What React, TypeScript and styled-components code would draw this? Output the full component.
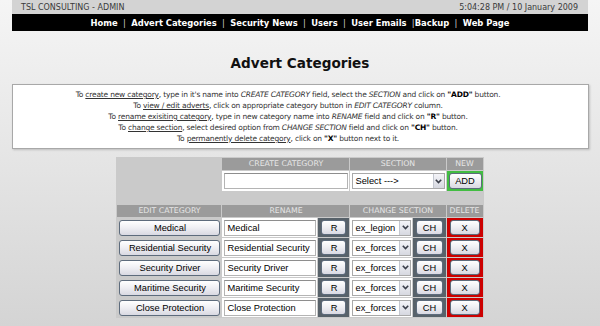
import * as React from 'react';
import styled, { createGlobalStyle } from 'styled-components';

const GlobalStyle = createGlobalStyle`
  html, body {
    margin: 0;
    padding: 0;
  }
  body {
    min-height: 326px;
    background: linear-gradient(to bottom, #f5f5f5 0px, #e8e8e8 130px, #d4d4d4 326px);
    font-family: "DejaVu Sans", Verdana, sans-serif;
    color: #333;
  }
  * {
    box-sizing: border-box;
  }
`;

const Page = styled.div`
  width: 600px;
  min-height: 326px;
  padding-bottom: 8px;
`;

const Header = styled.div`
  width: 576px;
  margin: 0 auto;
`;

const TopBar = styled.div`
  height: 14px;
  background: #d3d3d3;
  display: flex;
  align-items: center;
  justify-content: space-between;
  padding: 0 10px 0 9px;
  font-size: 8px;
  color: #3a3a3a;
`;

const NavBar = styled.div`
  height: 17px;
  background: #000;
  display: flex;
  align-items: center;
  justify-content: center;
  font-size: 8.4px;
  font-weight: bold;
  color: #fff;
  white-space: pre;
`;

const NavSep = styled.span`
  font-weight: normal;
  color: #d0d0d0;
`;

const Title = styled.h1`
  margin: 24px 0 13px;
  height: 16px;
  line-height: 16px;
  font-size: 13.6px;
  font-weight: bold;
  text-align: center;
  color: #111;
`;

const Info = styled.div`
  width: 577px;
  margin: 0 auto;
  background: #fff;
  border: 1px solid #a8a8a8;
  box-shadow: 1px 1px 2px rgba(0, 0, 0, 0.18);
  padding: 4px 24px 4px 0;
  text-align: center;
  font-size: 7.5px;
  letter-spacing: -0.2px;
  line-height: 11px;
  color: #333;

  u {
    text-decoration: underline;
  }
  b {
    color: #000;
  }
`;

const Table = styled.table`
  margin: 8px auto 0;
  width: 367px;
  table-layout: fixed;
  border-collapse: separate;
  border-spacing: 1px;
  background: #cacaca;
`;

const Head = styled.th`
  background: #9b9b9b;
  color: #e6e6e6;
  font-size: 7.8px;
  font-weight: normal;
  text-transform: uppercase;
  text-align: center;
  height: 12px;
  line-height: 12px;
  padding: 0;
`;

type Tone = 'plain' | 'white' | 'dark' | 'red' | 'green';

const toneBg: Record<Tone, string> = {
  plain: 'transparent',
  white: '#fff',
  dark: '#58626a',
  red: '#cc0000',
  green: '#42bd42',
};

const Cell = styled.td<{ $tone: Tone; $h?: number }>`
  background: ${p => toneBg[p.$tone]};
  height: ${p => p.$h || 19}px;
  padding: ${p =>
    p.$tone === 'plain' ? '0 1px 0 2px' : p.$tone === 'white' ? '0 1px 0 2px' : p.$tone === 'green' ? '2px 1px 2px 2px' : '0 3px'};
  vertical-align: middle;
`;

const Btn = styled.button<{ $h?: number }>`
  display: block;
  width: 100%;
  height: ${p => p.$h || 16}px;
  margin: 0;
  padding: 0;
  border: 1px solid #5d6b7c;
  border-radius: 3px;
  background: linear-gradient(to bottom, #ffffff 0%, #f0f0f4 45%, #d9d9e2 100%);
  font-family: "Liberation Sans", Arial, sans-serif;
  font-size: 9.3px;
  color: #000;
  line-height: 14px;
  white-space: nowrap;
  overflow: hidden;
`;

const TextBox = styled.input`
  display: block;
  width: 100%;
  height: 16px;
  margin: 0;
  padding: 0 2px;
  border: 1px solid #b4b4b4;
  border-top-color: #8e8e8e;
  background: #fff;
  font-family: "Liberation Sans", Arial, sans-serif;
  font-size: 9.3px;
  color: #000;
  outline: none;
`;

const SelectBox = styled.div`
  display: flex;
  align-items: stretch;
  width: 100%;
  height: 16px;
  border: 1px solid #a9a9a9;
  background: #fff;
  font-family: "Liberation Sans", Arial, sans-serif;
  font-size: 9.3px;
  color: #000;
`;

const SelectText = styled.span`
  flex: 1;
  padding-left: 2px;
  line-height: 14px;
  white-space: nowrap;
  overflow: hidden;
`;

const SelectArrow = styled.span`
  width: 11px;
  display: flex;
  align-items: center;
  justify-content: center;
  border-left: 1px solid #c3c7d0;
  background: linear-gradient(to bottom, #f4f4f8, #d6d8e0);
`;

const Select: React.FC<{ value: string }> = ({ value }) => (
  <SelectBox>
    <SelectText>{value}</SelectText>
    <SelectArrow>
      <svg width="7" height="5" viewBox="0 0 7 5">
        <polyline points="0.8,0.8 3.5,3.6 6.2,0.8" fill="none" stroke="#3b3f4a" strokeWidth="1.6" />
      </svg>
    </SelectArrow>
  </SelectBox>
);

const navItems = ['Home', 'Advert Categories', 'Security News', 'Users', 'User Emails', 'Backup', 'Web Page'];
const navSeps = ['  |  ', '  |  ', '  |  ', '  |  ', '  |', '  |  '];

const categories = [
  { name: 'Medical', section: 'ex_legion' },
  { name: 'Residential Security', section: 'ex_forces' },
  { name: 'Security Driver', section: 'ex_forces' },
  { name: 'Maritime Security', section: 'ex_forces' },
  { name: 'Close Protection', section: 'ex_forces' },
];

const App: React.FC = () => {
  return (
    <Page>
      <GlobalStyle />
      <Header>
        <TopBar>
          <span>TSL CONSULTING - ADMIN</span>
          <span>5:04:28 PM / 10 January 2009</span>
        </TopBar>
        <NavBar>
          {navItems.map((item, i) => (
            <React.Fragment key={item}>
              <span>{item}</span>
              {i < navSeps.length && <NavSep>{navSeps[i]}</NavSep>}
            </React.Fragment>
          ))}
        </NavBar>
      </Header>

      <Title>Advert Categories</Title>

      <Info>
        <div>
          To <u>create new category</u>, type in it's name into <i>CREATE CATEGORY</i> field, select the <i>SECTION</i> and
          click on <b>"ADD"</b> button.
        </div>
        <div>
          To <u>view / edit adverts</u>, click on appropriate category button in <i>EDIT CATEGORY</i> column.
        </div>
        <div>
          To <u>rename exisiting category</u>, type in new category name into <i>RENAME</i> field and click on <b>"R"</b>{' '}
          button.
        </div>
        <div>
          To <u>change section</u>, select desired option from <i>CHANGE SECTION</i> field and click on <b>"CH"</b> button.
        </div>
        <div>
          To <u>permanently delete category</u>, click on <b>"X"</b> button next to it.
        </div>
      </Info>

      <Table>
        <colgroup>
          <col style={{ width: 104 }} />
          <col style={{ width: 95 }} />
          <col style={{ width: 31 }} />
          <col style={{ width: 62 }} />
          <col style={{ width: 32 }} />
          <col style={{ width: 36 }} />
        </colgroup>
        <tbody>
          <tr>
            <Cell $tone="plain" $h={12} rowSpan={3} />
            <Head colSpan={2}>Create Category</Head>
            <Head colSpan={2}>Section</Head>
            <Head>New</Head>
          </tr>
          <tr>
            <Cell $tone="white" $h={20} colSpan={2}>
              <TextBox defaultValue="" />
            </Cell>
            <Cell $tone="white" $h={20} colSpan={2}>
              <Select value="Select --->" />
            </Cell>
            <Cell $tone="green" $h={20}>
              <Btn $h={16}>ADD</Btn>
            </Cell>
          </tr>
          <tr>
            <Cell $tone="plain" $h={12} colSpan={5} />
          </tr>
          <tr>
            <Head>Edit Category</Head>
            <Head colSpan={2}>Rename</Head>
            <Head colSpan={2}>Change Section</Head>
            <Head>Delete</Head>
          </tr>
          {categories.map(cat => (
            <tr key={cat.name}>
              <Cell $tone="plain">
                <Btn>{cat.name}</Btn>
              </Cell>
              <Cell $tone="white">
                <TextBox defaultValue={cat.name} />
              </Cell>
              <Cell $tone="dark">
                <Btn $h={15}>R</Btn>
              </Cell>
              <Cell $tone="white">
                <Select value={cat.section} />
              </Cell>
              <Cell $tone="dark">
                <Btn $h={15}>CH</Btn>
              </Cell>
              <Cell $tone="red">
                <Btn $h={15}>X</Btn>
              </Cell>
            </tr>
          ))}
        </tbody>
      </Table>
    </Page>
  );
};

export default App;
